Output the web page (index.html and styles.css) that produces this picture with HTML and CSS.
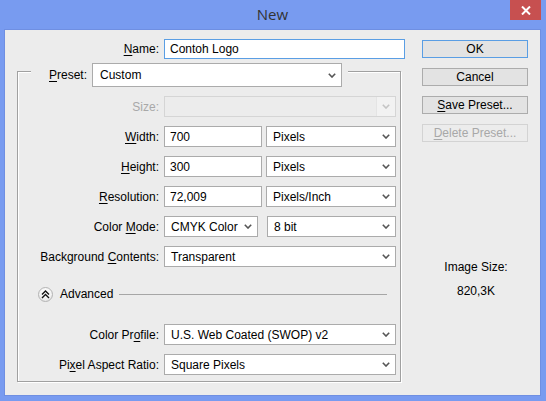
FILE: index.html
```html
<!DOCTYPE html>
<html>
<head>
<meta charset="utf-8">
<title>New</title>
<link rel="stylesheet" href="styles.css">
</head>
<body>
<div class="titlebar">
  <span class="title">New</span>
  <div class="close">
    <svg width="10" height="9" viewBox="0 0 10 9"><path d="M1 0.5 L9 8.5 M9 0.5 L1 8.5" stroke="#fff" stroke-width="2"/></svg>
  </div>
</div>
<div class="client">
  <div class="main">
    <div class="name-row">
      <span class="lbl"><u>N</u>ame:</span>
      <div class="field input focus">Contoh Logo</div>
    </div>
    <div class="group">
      <div class="group-head">
        <span class="lbl"><u>P</u>reset:</span>
        <div class="field select preset"><span>Custom</span><svg class="arrow" width="8" height="5" viewBox="0 0 8 5"><path d="M0.8 0.8 L4 4 L7.2 0.8" fill="none" stroke="#555" stroke-width="1.6"/></svg></div>
      </div>
      <div class="rows">
        <span class="lbl disabled">Size:</span>
        <div class="field select disabled-field"><span></span><span class="dis-btn"><svg class="arrow" width="8" height="5" viewBox="0 0 8 5"><path d="M0.8 0.8 L4 4 L7.2 0.8" fill="none" stroke="#c4c4c4" stroke-width="1.6"/></svg></span></div>

        <span class="lbl"><u>W</u>idth:</span>
        <div class="pair">
          <div class="field input w98">700</div>
          <div class="field select w130"><span>Pixels</span><svg class="arrow" width="8" height="5" viewBox="0 0 8 5"><path d="M0.8 0.8 L4 4 L7.2 0.8" fill="none" stroke="#555" stroke-width="1.6"/></svg></div>
        </div>

        <span class="lbl"><u>H</u>eight:</span>
        <div class="pair">
          <div class="field input w98">300</div>
          <div class="field select w130"><span>Pixels</span><svg class="arrow" width="8" height="5" viewBox="0 0 8 5"><path d="M0.8 0.8 L4 4 L7.2 0.8" fill="none" stroke="#555" stroke-width="1.6"/></svg></div>
        </div>

        <span class="lbl"><u>R</u>esolution:</span>
        <div class="pair">
          <div class="field input w98">72,009</div>
          <div class="field select w130"><span>Pixels/Inch</span><svg class="arrow" width="8" height="5" viewBox="0 0 8 5"><path d="M0.8 0.8 L4 4 L7.2 0.8" fill="none" stroke="#555" stroke-width="1.6"/></svg></div>
        </div>

        <span class="lbl">Color <u>M</u>ode:</span>
        <div class="pair wide-gap">
          <div class="field select w94"><span>CMYK Color</span><svg class="arrow" width="8" height="5" viewBox="0 0 8 5"><path d="M0.8 0.8 L4 4 L7.2 0.8" fill="none" stroke="#555" stroke-width="1.6"/></svg></div>
          <div class="field select w129"><span>8 bit</span><svg class="arrow" width="8" height="5" viewBox="0 0 8 5"><path d="M0.8 0.8 L4 4 L7.2 0.8" fill="none" stroke="#555" stroke-width="1.6"/></svg></div>
        </div>

        <span class="lbl">Background <u>C</u>ontents:</span>
        <div class="field select"><span>Transparent</span><svg class="arrow" width="8" height="5" viewBox="0 0 8 5"><path d="M0.8 0.8 L4 4 L7.2 0.8" fill="none" stroke="#555" stroke-width="1.6"/></svg></div>
      </div>

      <div class="advanced">
        <span class="adv-btn">
          <svg width="9" height="9" viewBox="0 0 9 9"><path d="M1 4.5 L4.5 1 L8 4.5 M1 8 L4.5 4.5 L8 8" fill="none" stroke="#111" stroke-width="1.4"/></svg>
        </span>
        <span class="adv-text">Advanced</span>
        <span class="adv-line"></span>
      </div>

      <div class="rows rows2">
        <span class="lbl">Color Pr<u>o</u>file:</span>
        <div class="field select"><span>U.S. Web Coated (SWOP) v2</span><svg class="arrow" width="8" height="5" viewBox="0 0 8 5"><path d="M0.8 0.8 L4 4 L7.2 0.8" fill="none" stroke="#555" stroke-width="1.6"/></svg></div>

        <span class="lbl">Pi<u>x</u>el Aspect Ratio:</span>
        <div class="field select"><span>Square Pixels</span><svg class="arrow" width="8" height="5" viewBox="0 0 8 5"><path d="M0.8 0.8 L4 4 L7.2 0.8" fill="none" stroke="#555" stroke-width="1.6"/></svg></div>
      </div>
    </div>
  </div>
  <div class="side">
    <div class="btn default">OK</div>
    <div class="btn">Cancel</div>
    <div class="btn"><u>S</u>ave Preset...</div>
    <div class="btn disabled-btn"><u>D</u>elete Preset...</div>
    <div class="imgsize">
      <div>Image Size:</div>
      <div>820,3K</div>
    </div>
  </div>
</div>
</body>
</html>
```

FILE: styles.css
```css
html, body {
  margin: 0;
  padding: 0;
}
body {
  width: 546px;
  height: 401px;
  overflow: hidden;
  background: #789bf0;
  font-family: "Liberation Sans", Arial, sans-serif;
  font-size: 12px;
  color: #000;
}
u {
  text-decoration: underline;
  text-underline-offset: 2px;
}
.titlebar {
  position: relative;
  height: 30px;
  text-align: center;
}
.title {
  display: inline-block;
  margin-left: -1px;
  line-height: 29px;
  font-family: "Open Sans", "Liberation Sans", sans-serif;
  font-size: 15px;
  color: #333;
}
.close {
  position: absolute;
  top: 0;
  right: 5px;
  width: 31px;
  height: 20px;
  background: #c75050;
  display: flex;
  align-items: center;
  justify-content: center;
}
.client {
  margin-left: 5px;
  width: 535px;
  height: 365px;
  background: #ececec;
  box-shadow: 0 0 0 1px #6f8fe2;
  display: flex;
  box-sizing: border-box;
}
.main {
  width: 405px;
  padding-top: 9px;
}
.lbl {
  white-space: nowrap;
  text-align: right;
  line-height: 14px;
}
.disabled {
  color: #a8a8a8;
}
.name-row {
  display: grid;
  grid-template-columns: 154px 241px;
  column-gap: 5px;
  align-items: center;
}
.field {
  box-sizing: border-box;
  height: 21px;
  background: #fff;
  border: 1px solid #ababab;
  display: flex;
  align-items: center;
  white-space: nowrap;
  overflow: hidden;
}
.input {
  padding-left: 5px;
}
.focus {
  border-color: #5a9ee4;
  height: 20px;
}
.select {
  padding-left: 6px;
  padding-right: 5px;
  justify-content: space-between;
}
.arrow {
  flex: none;
}
.group {
  box-sizing: border-box;
  width: 384px;
  margin: 12px 0 0 12px;
  border: 1px solid #a0a0a0;
  box-shadow: inset 1px 1px 0 #fff, 1px 1px 0 #fff;
  padding-bottom: 6px;
}
.group-head {
  display: flex;
  align-items: center;
  width: fit-content;
  margin: -9px 0 0 13px;
  padding: 0 6px 0 18px;
  background: #ececec;
  column-gap: 5px;
}
.preset {
  width: 250px;
  height: 24px;
  padding-left: 7px;
}
.rows {
  display: grid;
  grid-template-columns: 141px 232px;
  column-gap: 5px;
  row-gap: 9px;
  align-items: center;
  margin-top: 9px;
}
.rows2 {
  margin-top: 20px;
}
.disabled-field {
  background: #ececec;
  border-color: #d5d5d5;
  padding-right: 0;
}
.dis-btn {
  width: 18px;
  height: 19px;
  background: #f2f2f2;
  border-left: 1px solid #e4e4e4;
  display: flex;
  align-items: center;
  justify-content: center;
}
.pair {
  display: flex;
  column-gap: 4px;
}
.wide-gap {
  column-gap: 9px;
}
.w98 { width: 98px; }
.w130 { width: 130px; }
.w94 { width: 94px; }
.w129 { width: 129px; }
.advanced {
  display: flex;
  align-items: center;
  height: 20px;
  margin-top: 17px;
  padding-left: 20px;
}
.adv-btn {
  box-sizing: border-box;
  width: 15px;
  height: 15px;
  border-radius: 50%;
  border: 1px solid #b4b4b4;
  background: radial-gradient(circle at 50% 35%, #ffffff 0%, #f4f4f4 50%, #dadada 100%);
  display: flex;
  align-items: center;
  justify-content: center;
}
.adv-text {
  margin-left: 7px;
}
.adv-line {
  flex: 1;
  height: 1px;
  background: #a6a6a6;
  margin: 0 13px 0 6px;
}
.side {
  width: 106px;
  margin-left: 12px;
  padding-top: 10px;
  display: flex;
  flex-direction: column;
  row-gap: 10px;
}
.btn {
  box-sizing: border-box;
  height: 18px;
  border: 1px solid #acacac;
  background: #e3e3e3;
  display: flex;
  align-items: center;
  justify-content: center;
  white-space: nowrap;
}
.default {
  border-color: #5a9ee4;
}
.disabled-btn {
  color: #a8a8a8;
  border-color: #d3d3d3;
  background: #ececec;
}
.imgsize {
  margin-top: 108px;
  display: flex;
  flex-direction: column;
  align-items: center;
  row-gap: 10px;
  line-height: 14px;
  padding-left: 2px;
}
```
